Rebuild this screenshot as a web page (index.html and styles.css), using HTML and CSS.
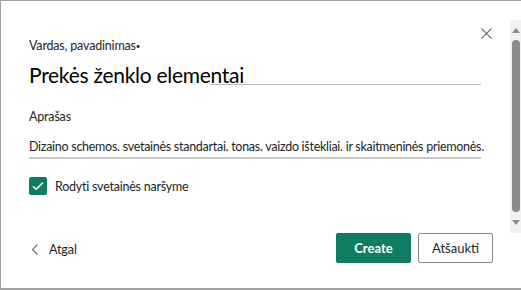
FILE: index.html
```html
<!DOCTYPE html>
<html lang="lt">
<head>
<meta charset="utf-8">
<link rel="stylesheet" href="styles.css">
</head>
<body>
<div class="dialog">
  <div class="content">
    <div class="top-bar">
      <button class="close" aria-label="Uždaryti">
        <svg width="11" height="11" viewBox="0 0 11 11"><path d="M0.5 0.5 L10.5 10.5 M10.5 0.5 L0.5 10.5" stroke="#707070" stroke-width="1.1" fill="none"/></svg>
      </button>
    </div>
    <div class="field-label">Vardas, pavadinimas<span class="req">•</span></div>
    <div class="title-input">Prekės ženklo elementai</div>
    <div class="title-line"></div>
    <div class="field-label desc-label">Aprašas</div>
    <div class="desc-input">Dizaino schemos. svetainės standartai. tonas. vaizdo ištekliai. ir skaitmeninės priemonės.</div>
    <div class="check-row">
      <span class="checkbox">
        <svg width="12" height="10" viewBox="0 0 12 10"><path d="M1 5.2 L4.2 8.2 L11 1.5" stroke="#fff" stroke-width="1.5" fill="none"/></svg>
      </span>
      <span class="check-label">Rodyti svetainės naršyme</span>
    </div>
    <div class="footer">
      <button class="back">
        <svg width="8" height="11" viewBox="0 0 8 11"><path d="M6.5 0.5 L1.5 5.5 L6.5 10.5" stroke="#6e6e6e" stroke-width="1.1" fill="none"/></svg>
        <span>Atgal</span>
      </button>
      <div class="actions">
        <button class="btn primary">Create</button>
        <button class="btn secondary">Atšaukti</button>
      </div>
    </div>
  </div>
  <div class="scrollbar">
    <div class="arrow up"></div>
    <div class="thumb"></div>
    <div class="arrow down"></div>
  </div>
</div>
</body>
</html>
```
FILE: styles.css
```css
* { box-sizing: border-box; }
html, body { margin: 0; padding: 0; background: #fff; }
body { font-family: Lato, "Liberation Sans", Arial, sans-serif; color: #201f1e; }

.dialog {
  width: 521px;
  height: 290px;
  border-top: 1px solid #a0a0a0;
  border-left: 1px solid #a0a0a0;
  border-bottom: 2px solid #a0a0a0;
  display: flex;
  overflow: hidden;
}

.content {
  flex: 1;
  min-width: 0;
  padding: 0 17px 0 28px;
  display: flex;
  flex-direction: column;
}

.top-bar {
  padding-top: 27px;
  height: 37px;
  display: flex;
  justify-content: flex-end;
}
.close {
  border: 0;
  background: none;
  padding: 0;
  width: 11px;
  height: 11px;
  margin-right: 1px;
  display: block;
}
.close svg { display: block; }

.field-label {
  font-size: 12.5px;
  letter-spacing: -0.18px;
  line-height: 16px;
  color: #252423;
}
.req { font-size: 8px; vertical-align: 1px; }

.title-input {
  margin-top: 10px;
  font-size: 21px;
  letter-spacing: -0.28px;
  line-height: 22px;
  color: #000;
  position: relative;
  z-index: 1;
}
.title-line {
  margin: -2px 12px 0 182px;
  height: 1px;
  background: #bdbdbd;
}

.desc-label { margin-top: 24px; }

.desc-input {
  margin: 14px 12px 0 0;
  font-size: 12.5px;
  letter-spacing: -0.28px;
  line-height: 16px;
  padding-bottom: 2px;
  border-bottom: 2px solid #c8c8c8;
  white-space: nowrap;
  color: #201f1e;
}

.check-row {
  margin-top: 18px;
  display: flex;
  align-items: center;
  gap: 8px;
}
.checkbox {
  width: 18px;
  height: 18px;
  border-radius: 2px;
  background: #107c64;
  display: flex;
  align-items: center;
  justify-content: center;
}
.checkbox svg { display: block; }
.check-label { font-size: 12.5px; letter-spacing: -0.23px; line-height: 16px; color: #201f1e; margin-top: 2px; }

.footer {
  margin-top: 38px;
  display: flex;
  align-items: center;
  justify-content: space-between;
}
.back {
  border: 0;
  background: none;
  padding: 0 0 0 2px;
  display: flex;
  align-items: center;
  gap: 10px;
  font: inherit;
  font-size: 12.5px;
  letter-spacing: -0.1px;
  color: #201f1e;
  margin-top: 3px;
}
.back svg { display: block; }

.actions { display: flex; gap: 7px; }
.btn {
  height: 30px;
  border-radius: 2px;
  font-family: inherit;
  font-size: 13px;
  padding: 0;
}
.primary {
  width: 75px;
  background: #107c64;
  border: 1px solid #107c64;
  color: #fff;
  font-weight: bold;
}
.secondary {
  width: 75px;
  background: #fff;
  border: 1px solid #8a8886;
  color: #201f1e;
}

.scrollbar {
  flex: none;
  width: 11px;
  margin-top: 19px;
  height: 213px;
  background: #f1f1f1;
  display: flex;
  flex-direction: column;
  align-items: center;
}
.arrow { width: 0; height: 0; border-left: 4px solid transparent; border-right: 4px solid transparent; }
.arrow.up { margin-top: 8px; border-bottom: 5px solid #8a8a8a; }
.arrow.down { margin-top: 8px; border-top: 5px solid #8a8a8a; }
.thumb {
  margin-top: 7px;
  width: 8px;
  height: 172px;
  background: #8a8a8a;
  border-radius: 4px;
}
```
